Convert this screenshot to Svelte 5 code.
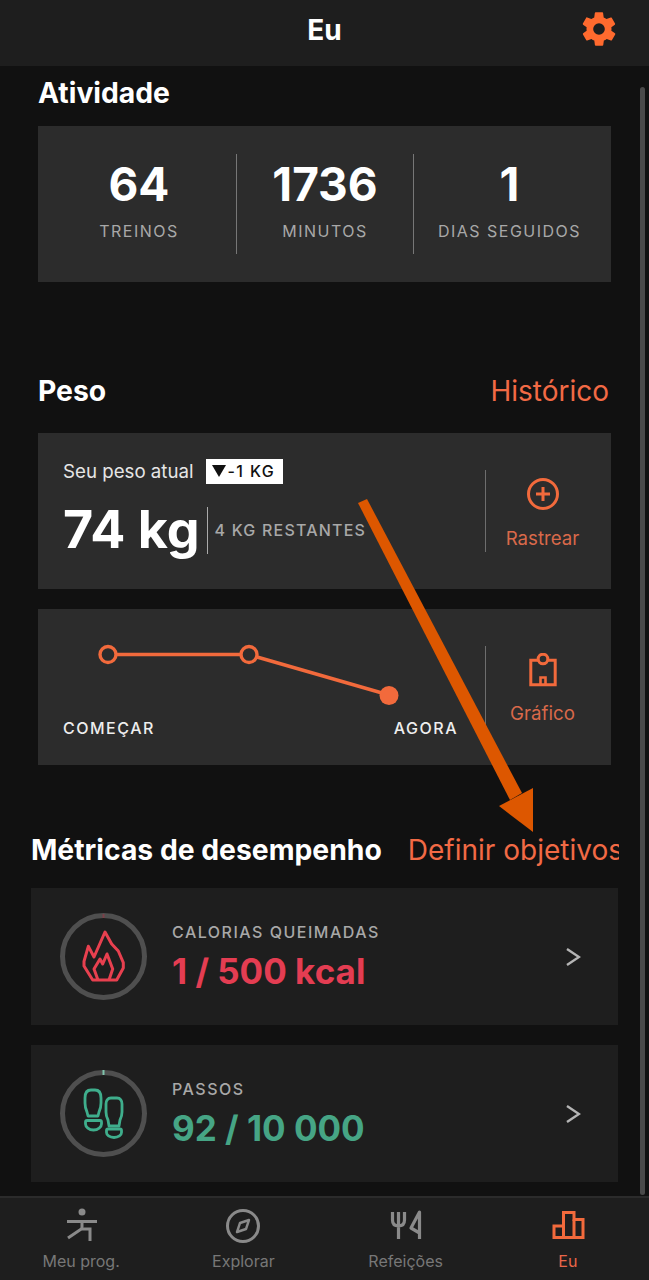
<script>
  const stats = [
    { value: '64', label: 'TREINOS' },
    { value: '1736', label: 'MINUTOS' },
    { value: '1', label: 'DIAS SEGUIDOS' }
  ];
  const tabs = [
    { id: 'prog', label: 'Meu prog.' },
    { id: 'explore', label: 'Explorar' },
    { id: 'meals', label: 'Refeições' },
    { id: 'me', label: 'Eu', active: true }
  ];
</script>

<div class="page">
  <header class="topbar">
    <span class="title">Eu</span>
    <svg class="gear" viewBox="0 0 24 24" width="40" height="40">
      <path fill="#ff6a2e" d="M19.4 13c.05-.33.1-.66.1-1s-.05-.67-.1-1l2.1-1.6c.2-.15.25-.43.12-.65l-2-3.46c-.12-.22-.4-.3-.6-.22l-2.5 1c-.52-.4-1.08-.73-1.7-.98l-.37-2.65A.5.5 0 0 0 14 2h-4a.5.5 0 0 0-.5.42l-.37 2.65c-.62.25-1.18.59-1.7.98l-2.5-1c-.22-.08-.48 0-.6.22l-2 3.46c-.13.22-.08.5.12.65L4.6 11c-.05.33-.1.67-.1 1s.05.67.1 1l-2.1 1.6c-.2.15-.25.43-.12.65l2 3.46c.12.22.4.3.6.22l2.5-1c.52.4 1.08.73 1.7.98l.37 2.65c.05.24.26.42.5.42h4c.25 0 .45-.18.5-.42l.37-2.65c.62-.25 1.18-.59 1.7-.98l2.5 1c.22.08.48 0 .6-.22l2-3.46c.13-.22.08-.5-.12-.65L19.4 13zM12 15.500a3.500 3.500 0 1 1 0-7 3.500 3.500 0 0 1 0 7z"/>
    </svg>
  </header>

  <main class="content">
    <h2 class="heading first">Atividade</h2>
    <section class="card stats">
      {#each stats as s}
        <div class="stat">
          <div class="stat-value">{s.value}</div>
          <div class="stat-label">{s.label}</div>
        </div>
      {/each}
    </section>

    <div class="heading-row peso">
      <h2 class="heading">Peso</h2>
      <span class="link">Histórico</span>
    </div>

    <section class="card weight">
      <div class="weight-main">
        <div class="weight-top">
          <span class="weight-caption">Seu peso atual</span>
          <span class="badge"><i class="tri"></i>-1 KG</span>
        </div>
        <div class="weight-bottom">
          <span class="weight-value">74 kg</span>
          <span class="weight-left">4 KG RESTANTES</span>
        </div>
      </div>
      <div class="side-action">
        <svg class="plus" viewBox="0 0 32 32" width="32" height="32" fill="none" stroke="#f26a3c">
          <circle cx="16" cy="16" r="14.500" stroke-width="3" />
          <path d="M16 9v14M9 16h14" stroke-width="3" />
        </svg>
        <span>Rastrear</span>
      </div>
    </section>

    <section class="card chart">
      <div class="chart-main">
        <svg class="line" viewBox="0 0 422 80" width="422" height="80" fill="none" stroke="#f26a3c" stroke-width="3.400">
          <path d="M78 24.500H203M219 27L351 65" />
          <circle cx="70" cy="24.500" r="8" />
          <circle cx="211" cy="24.500" r="8" />
          <circle cx="351" cy="65.500" r="9.500" fill="#f26a3c" stroke="none" />
        </svg>
        <div class="chart-labels">
          <span>COMEÇAR</span>
          <span>AGORA</span>
        </div>
      </div>
      <div class="side-action">
        <svg class="clip" viewBox="0 0 32 34" width="32" height="34" fill="none" stroke="#f26a3c" stroke-width="3">
          <path d="M11 7.300H3.800V31.700H28.200V7.300H21" />
          <circle cx="16" cy="6" r="4.800" />
          <path d="M13.500 31.700V24.500H18.500V31.700" stroke-width="2.600" />
        </svg>
        <span>Gráfico</span>
      </div>
    </section>

    <div class="heading-row metrics-head">
      <h2 class="heading">Métricas de desempenho</h2>
      <span class="link">Definir objetivos</span>
    </div>

    <section class="metric">
      <div class="ring">
        <svg viewBox="0 0 87 87" width="87" height="87" fill="none">
          <circle cx="43.500" cy="43.500" r="41" stroke="#4f4f4f" stroke-width="5" />
          <path d="M43.500 1v4" stroke="#7c4048" stroke-width="2" />
          <g stroke="#e8404f" stroke-width="3" stroke-linejoin="round">
            <path d="M32.700 67L24 53v-4.700L28.300 33.300 34 44 45 19 51.700 31 58.300 38 63.300 49.700V55L56.700 67z" />
            <path d="M38 67L34 56 40 46 42.700 51 47 41 52.700 56 49 67" />
          </g>
        </svg>
      </div>
      <div class="metric-text">
        <div class="metric-label">CALORIAS QUEIMADAS</div>
        <div class="metric-value red">1 / 500 kcal</div>
      </div>
      <svg class="chev" viewBox="0 0 16 20" width="16" height="20" fill="none" stroke="#b5b5b5" stroke-width="2.400">
        <path d="M2 2l12 8-12 8" />
      </svg>
    </section>

    <section class="metric">
      <div class="ring">
        <svg viewBox="0 0 87 87" width="87" height="87" fill="none">
          <circle cx="43.500" cy="43.500" r="41" stroke="#4f4f4f" stroke-width="5" />
          <path d="M43.500 0v5" stroke="#7fc4ac" stroke-width="2" />
          <g stroke="#3fae8c" stroke-width="2.800" stroke-linejoin="round">
            <path d="M31 20h4c4 0 6 3 6 8v5c0 4-1 7-2 9l-1 4H28l-1-4c-1-2-2-5-2-9v-5c0-5 2-8 6-8z" />
            <path d="M27 50.500h13c1 0 1.500.5 1.500 1.500v2c0 3-3.500 6-8 6s-8-3-8-6v-2c0-1 .5-1.500 1.500-1.500z" />
            <path d="M51 28h6c3.500 0 5 3 5 6v8c0 3-1 6-2 8l-1 6H49l-1-6c-1-2-2-5-2-8v-8c0-3 1.500-6 5-6z" />
            <path d="M48 59h12c1 0 1.500.5 1.500 1.500v2c0 2.500-3 5-7.500 5s-7.500-2.500-7.500-5v-2c0-1 .5-1.500 1.500-1.500z" />
          </g>
        </svg>
      </div>
      <div class="metric-text">
        <div class="metric-label">PASSOS</div>
        <div class="metric-value green">92 / 10 000</div>
      </div>
      <svg class="chev" viewBox="0 0 16 20" width="16" height="20" fill="none" stroke="#b5b5b5" stroke-width="2.400">
        <path d="M2 2l12 8-12 8" />
      </svg>
    </section>
  </main>

  <nav class="tabbar">
    {#each tabs as t}
      <div class="tab" class:active={t.active}>
        <div class="tab-icon">
          {#if t.id === 'prog'}
            <svg viewBox="0 0 34 36" width="34" height="36" fill="none" stroke="#8a8a8a" stroke-width="3">
              <circle cx="18" cy="4" r="3.500" fill="#8a8a8a" stroke="none" />
              <path d="M3 13.500H33" />
              <path d="M18 13.500V19c0 1-.5 2-1.500 2.500L4 30" />
              <path d="M17 21H26V33" />
            </svg>
          {:else if t.id === 'explore'}
            <svg viewBox="0 0 36 36" width="36" height="36" fill="none" stroke="#8a8a8a" stroke-width="3">
              <circle cx="18" cy="18" r="15.500" />
              <path d="M24 12l-3 9-9 3 3-9z" stroke-width="2.400" stroke-linejoin="round" />
            </svg>
          {:else if t.id === 'meals'}
            <svg viewBox="0 0 32 34" width="32" height="34" fill="none" stroke="#8a8a8a" stroke-width="3.200">
              <path d="M2.500 3v8c0 4 2.500 6 6 6s6-2 6-6V3M8.500 3v27" />
              <path d="M29.500 30V3L21 19l8.500 5" stroke-linejoin="round" />
            </svg>
          {:else}
            <svg viewBox="0 0 34 32" width="34" height="32" fill="none" stroke="#f26a3c" stroke-width="3">
              <path d="M3 27.500V16H12.500V2.500H23V9.500H32V27.500z" />
              <path d="M12.500 16V27.500M23 9.500V27.500" />
            </svg>
          {/if}
        </div>
        <span>{t.label}</span>
      </div>
    {/each}
  </nav>

  <div class="scrollbar"></div>

  <svg class="arrow" viewBox="0 0 649 1280" width="649" height="1280">
    <path d="M358 503L367 499L522 793L510 800z" fill="#dd5700" />
    <path d="M533 788L533 832L499 806z" fill="#dd5700" />
  </svg>
</div>

<style>
  :global(body) {
    margin: 0;
    background: #111;
  }
  .page {
    position: relative;
    width: 649px;
    height: 1280px;
    display: flex;
    flex-direction: column;
    overflow: hidden;
    background: #111;
    color: #fff;
    font-family: Inter, "Liberation Sans", sans-serif;
  }
  .topbar {
    flex: 0 0 66px;
    display: flex;
    align-items: center;
    justify-content: center;
    background: #1e1e1e;
    position: relative;
  }
  .title {
    font-size: 28px;
    font-weight: 700;
    margin-top: -6px;
  }
  .gear {
    position: absolute;
    left: 579px;
    top: 9px;
  }
  .content {
    flex: 1;
    min-height: 0;
    display: flex;
    flex-direction: column;
    padding: 0 38px;
    overflow: hidden;
  }
  .heading {
    margin: 0;
    font-size: 28.300px;
    line-height: 34px;
    font-weight: 700;
    white-space: nowrap;
  }
  .first {
    margin-top: 10px;
    margin-bottom: 16px;
  }
  .card {
    background: #2c2c2c;
    height: 156px;
    flex: none;
    box-sizing: border-box;
    display: flex;
  }
  .stats {
    display: grid;
    grid-template-columns: 194px 177px 192px;
    align-items: center;
    padding: 0 6px 0 4px;
  }
  .stat {
    height: 100px;
    display: flex;
    flex-direction: column;
    align-items: center;
    border-left: 1px solid #777;
    padding-top: 4px;
    box-sizing: border-box;
  }
  .stat:first-child {
    border-left: none;
  }
  .stat-value {
    font-size: 46px;
    line-height: 52px;
    font-weight: 700;
  }
  .stat-label {
    margin-top: 11px;
    font-size: 16px;
    line-height: 20px;
    letter-spacing: 1.5px;
    color: #a8a8a8;
    white-space: nowrap;
  }
  .heading-row {
    display: flex;
    justify-content: space-between;
    align-items: center;
    flex: none;
  }
  .peso {
    margin-top: 92px;
    margin-bottom: 25px;
    padding-right: 2px;
  }
  .link {
    font-size: 28px;
    line-height: 34px;
    color: #f26a45;
    white-space: nowrap;
  }
  .weight {
    margin-bottom: 20px;
  }
  .weight-main {
    flex: 1;
    padding: 25px 0 0 25px;
    box-sizing: border-box;
  }
  .weight-top {
    display: flex;
    align-items: center;
    height: 26px;
  }
  .weight-caption {
    font-size: 18.700px;
    color: #e6e6e6;
  }
  .badge {
    display: inline-flex;
    align-items: center;
    margin-left: 12px;
    height: 25px;
    padding: 0 8px 0 6px;
    background: #fff;
    color: #111;
    font-size: 16px;
    font-weight: 500;
    letter-spacing: 1.400px;
  }
  .tri {
    width: 0;
    height: 0;
    border-left: 7px solid transparent;
    border-right: 7px solid transparent;
    border-top: 12px solid #111;
    margin-right: 2px;
  }
  .weight-bottom {
    display: flex;
    align-items: center;
    margin-top: 18px;
    height: 56px;
  }
  .weight-value {
    font-size: 52px;
    font-weight: 700;
    line-height: 56px;
    white-space: nowrap;
  }
  .weight-left {
    display: flex;
    align-items: center;
    height: 47px;
    margin-left: 7px;
    padding-left: 7px;
    border-left: 1px solid #aaa;
    font-size: 16px;
    font-weight: 500;
    letter-spacing: 1.200px;
    color: #a8a8a8;
    white-space: nowrap;
  }
  .side-action {
    flex: 0 0 126px;
    align-self: flex-start;
    margin-top: 37px;
    height: 82px;
    padding-right: 12px;
    border-left: 1px solid #6e6e6e;
    display: flex;
    flex-direction: column;
    align-items: center;
    color: #d9694a;
    font-size: 18.700px;
    box-sizing: border-box;
  }
  .side-action svg {
    flex: none;
  }
  .plus {
    margin-top: 8px;
  }
  .clip {
    margin-top: 7px;
  }
  .side-action span {
    line-height: 22px;
  }
  .plus + span {
    margin-top: 18px;
  }
  .clip + span {
    margin-top: 16px;
  }
  .chart-main {
    flex: 1;
    min-width: 0;
    padding: 21px 0 0 25px;
    box-sizing: border-box;
  }
  .line {
    display: block;
    margin-left: -25px;
  }
  .chart-labels {
    display: flex;
    justify-content: space-between;
    margin-top: 8px;
    width: 395px;
    font-size: 16px;
    line-height: 20px;
    font-weight: 500;
    letter-spacing: 1.500px;
    color: #eee;
  }
  .metrics-head {
    margin: 68px -7px 21px -7px;
    justify-content: flex-start;
    overflow: hidden;
    width: 588px;
  }
  .metrics-head .link {
    margin-left: 26px;
  }
  .metric {
    flex: none;
    margin: 0 -7px 20px -7px;
    height: 137px;
    background: #1e1e1e;
    display: flex;
    align-items: center;
    padding: 0 37px 0 29px;
  }
  .ring {
    flex: none;
    width: 87px;
    height: 87px;
  }
  .ring svg {
    display: block;
  }
  .metric-text {
    flex: 1;
    margin-left: 25px;
  }
  .metric-label {
    font-size: 16px;
    line-height: 20px;
    font-weight: 500;
    letter-spacing: 1.5px;
    color: #a8a8a8;
  }
  .metric-value {
    margin-top: 8px;
    font-size: 35px;
    line-height: 42px;
    font-weight: 700;
  }
  .red { color: #e43d52; }
  .green { color: #46a585; }
  .tabbar {
    flex: 0 0 84px;
    display: grid;
    grid-template-columns: repeat(4, 1fr);
    background: #1e1e1e;
    border-top: 2px solid #2b2b2b;
    box-sizing: border-box;
  }
  .tab {
    display: flex;
    flex-direction: column;
    align-items: center;
    color: #777;
    font-size: 16px;
  }
  .tab.active {
    color: #e8664a;
  }
  .tab-icon {
    height: 40px;
    margin-top: 8px;
    display: flex;
    align-items: center;
    justify-content: center;
  }
  .tab span {
    margin-top: 5px;
    line-height: 20px;
  }
  .scrollbar {
    position: absolute;
    left: 640px;
    top: 87px;
    width: 5px;
    height: 1108px;
    border-radius: 3px;
    background: #4a4a4a;
  }
  .arrow {
    position: absolute;
    left: 0;
    top: 0;
    pointer-events: none;
  }
</style>
